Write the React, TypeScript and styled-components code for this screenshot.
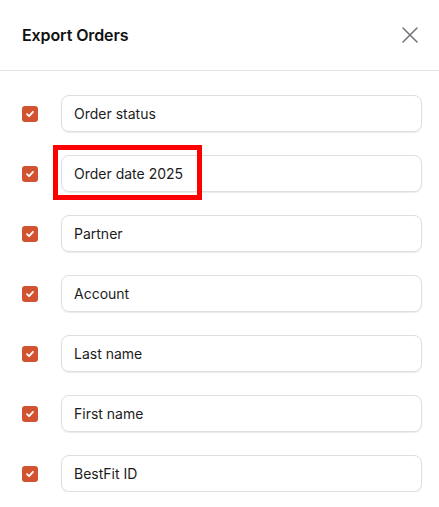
import styled, { createGlobalStyle } from 'styled-components';

const GlobalStyle = createGlobalStyle`
  body {
    margin: 0;
    background: #ffffff;
    font-family: Inter, "Noto Sans", sans-serif;
  }
`;

const Panel = styled.div`
  width: 439px;
  background: #fff;
`;

const Header = styled.div`
  height: 71px;
  display: flex;
  align-items: center;
  justify-content: space-between;
  padding: 0 21px 0 22px;
  box-sizing: border-box;
  border-bottom: 1px solid #e4e4e7;
`;

const Title = styled.h2`
  margin: 0;
  font-size: 16px;
  font-weight: 600;
  color: #111;
  letter-spacing: -0.1px;
`;

const CloseButton = styled.button`
  border: 0;
  background: none;
  padding: 0;
  width: 16px;
  height: 16px;
  display: flex;
  align-items: center;
  justify-content: center;
  color: #71717a;
  cursor: pointer;
`;

const List = styled.div`
  display: flex;
  flex-direction: column;
  gap: 23px;
  padding: 24px 17px 0 22px;
`;

const Row = styled.label`
  display: flex;
  align-items: center;
  gap: 23px;
`;

const Check = styled.span`
  width: 16px;
  height: 16px;
  flex: none;
  border-radius: 3px;
  background: #d2532f;
  display: flex;
  align-items: center;
  justify-content: center;
  margin-top: 1px;
`;

const Field = styled.div`
  position: relative;
  flex: 1;
  height: 37px;
  box-sizing: border-box;
  border: 1px solid #dedee2;
  border-radius: 8px;
  box-shadow: 0 1px 1px rgba(0, 0, 0, 0.08);
  display: flex;
  align-items: center;
  padding-left: 12px;
  font-size: 14px;
  color: #1c1c1c;
`;

const Highlight = styled.span`
  position: absolute;
  top: -11px;
  left: -9px;
  width: 149px;
  height: 55px;
  box-sizing: border-box;
  border: 5px solid #ff0000;
  pointer-events: none;
`;

const fields = [
  'Order status',
  'Order date 2025',
  'Partner',
  'Account',
  'Last name',
  'First name',
  'BestFit ID',
];

export default function App() {
  return (
    <>
      <GlobalStyle />
      <Panel>
        <Header>
          <Title>Export Orders</Title>
          <CloseButton aria-label="Close">
            <svg width="16" height="16" viewBox="0 0 16 16" fill="none">
              <path d="M1 1L15 15M15 1L1 15" stroke="currentColor" strokeWidth="1.5" strokeLinecap="round" />
            </svg>
          </CloseButton>
        </Header>
        <List>
          {fields.map((f, i) => (
            <Row key={f}>
              <Check>
                <svg width="10" height="10" viewBox="0 0 10 10" fill="none">
                  <path d="M2 5.2L4.1 7.2L8 2.9" stroke="#fff" strokeWidth="1.8" strokeLinecap="round" strokeLinejoin="round" />
                </svg>
              </Check>
              <Field>
                {f}
                {i === 1 && <Highlight />}
              </Field>
            </Row>
          ))}
        </List>
      </Panel>
    </>
  );
}
